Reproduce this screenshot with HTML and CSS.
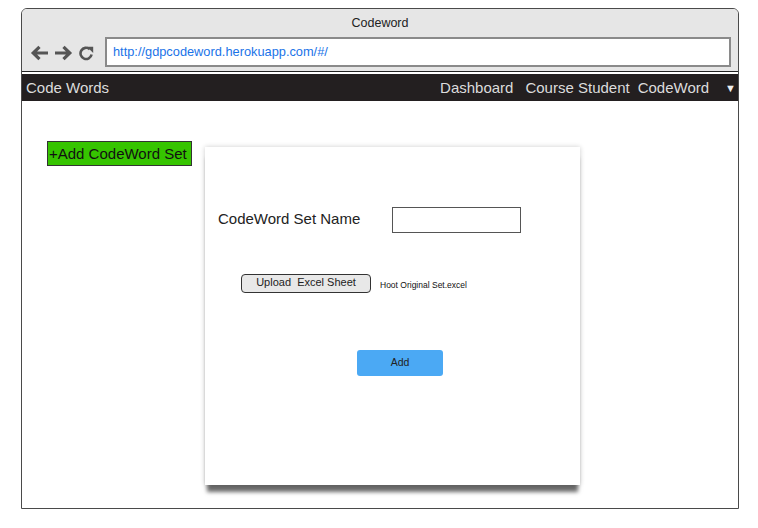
FILE: index.html
```html
<!DOCTYPE html>
<html>
<head>
<meta charset="utf-8">
<link rel="stylesheet" href="styles.css">
</head>
<body>
<div class="window">
  <div class="chrome">
    <div class="title">Codeword</div>
    <div class="addr-row">
      <div class="navicons">
        <svg width="19" height="16" viewBox="0 0 19 16"><path d="M18 8H3.5M9.5 1.8L3.2 8l6.3 6.2" fill="none" stroke="#555" stroke-width="3.2"/></svg>
        <svg width="19" height="16" viewBox="0 0 19 16"><path d="M1 8h14.5M9.5 1.8L15.8 8l-6.3 6.2" fill="none" stroke="#555" stroke-width="3.2"/></svg>
        <svg width="17" height="16" viewBox="0 0 17 16"><path d="M13.6 9.6A5.6 5.6 0 1 1 11.8 4.2" fill="none" stroke="#555" stroke-width="2.6"/><path d="M9 1.8h6.2V8z" fill="#555"/></svg>
      </div>
      <div class="address">http://gdpcodeword.herokuapp.com/#/</div>
    </div>
  </div>
  <div class="navbar">
    <span class="brand">Code Words</span>
    <div class="links">
      <span class="l1">Dashboard</span>
      <span class="l2">Course Student</span>
      <span>CodeWord</span>
      <span class="caret">&#9660;</span>
    </div>
  </div>
  <div class="content">
    <div class="add-set">+Add CodeWord Set</div>
    <div class="card">
      <div class="name-row">
        <span class="label">CodeWord Set Name</span>
        <div class="input"></div>
      </div>
      <div class="upload-row">
        <div class="upload">Upload&nbsp; Excel Sheet</div>
        <span class="file">Hoot Original Set.excel</span>
      </div>
      <div class="add-btn">Add</div>
    </div>
  </div>
</div>
</body>
</html>
```
FILE: styles.css
```css
* { box-sizing: border-box; }
html, body { margin: 0; padding: 0; background: #fff; }
body { font-family: "Liberation Sans", Arial, sans-serif; }

.window {
  margin: 8px 0 0 21px;
  width: 718px;
  height: 501px;
  border: 1px solid #4a4a4a;
  border-radius: 6px 6px 0 0;
  display: flex;
  flex-direction: column;
  overflow: hidden;
}
.chrome {
  background: #e6e6e6;
  height: 63px;
  border-bottom: 1px solid #222;
  display: flex;
  flex-direction: column;
}
.title {
  text-align: center;
  font-size: 12.5px;
  color: #222;
  padding-top: 7px;
  height: 28px;
}
.addr-row {
  display: flex;
  align-items: center;
  padding-left: 8px;
}
.navicons {
  display: flex;
  gap: 5px;
  align-items: center;
  width: 75px;
  padding-top: 1px;
}
.address {
  width: 626px;
  height: 30px;
  border: 2px solid #8a8a8a;
  background: #fff;
  color: #1a73e8;
  font-size: 12.8px;
  padding: 5px 0 0 6px;
}
.navbar {
  margin-top: 2px;
  height: 27px;
  background: #231f20;
  color: #dcdcdc;
  display: flex;
  align-items: center;
  justify-content: space-between;
  font-size: 15px;
  padding: 0 2px 0 4px;
}
.links { display: flex; align-items: center; }
.links .l1 { margin-right: 12px; }
.links .l2 { margin-right: 8px; }
.links .caret { font-size: 11px; margin-left: 16px; color: #eee; }

.content {
  display: flex;
  align-items: flex-start;
  padding: 40px 0 0 25px;
}
.add-set {
  width: 145px;
  height: 25px;
  background: #36c400;
  border: 1px solid #333;
  font-size: 15px;
  color: #111;
  padding: 3px 0 0 1px;
  white-space: nowrap;
}
.card {
  margin: 6px 0 0 13px;
  width: 375px;
  height: 338px;
  background: #fff;
  box-shadow: 0 9px 4px -2px rgba(0,0,0,0.58), 0 0 5px rgba(0,0,0,0.2);
  padding: 60px 0 0 13px;
}
.name-row { display: flex; align-items: center; }
.label { font-size: 15px; color: #222; width: 174px; margin-top: -4px; }
.input {
  width: 129px;
  height: 26px;
  border: 1.5px solid #555;
}
.upload-row {
  display: flex;
  align-items: center;
  margin: 41px 0 0 23px;
}
.upload {
  width: 130px;
  height: 19px;
  border: 1.3px solid #333;
  border-radius: 4px;
  background: #e8e8e8;
  font-size: 11px;
  text-align: center;
  line-height: 15px;
  color: #222;
}
.file { font-size: 8.5px; margin-left: 9px; padding-top: 2px; color: #111; }
.add-btn {
  margin: 57px 0 0 139px;
  width: 86px;
  height: 26px;
  background: #4ba9f4;
  border-radius: 3px;
  font-size: 10.5px;
  color: #222;
  text-align: center;
  line-height: 25px;
}
```
